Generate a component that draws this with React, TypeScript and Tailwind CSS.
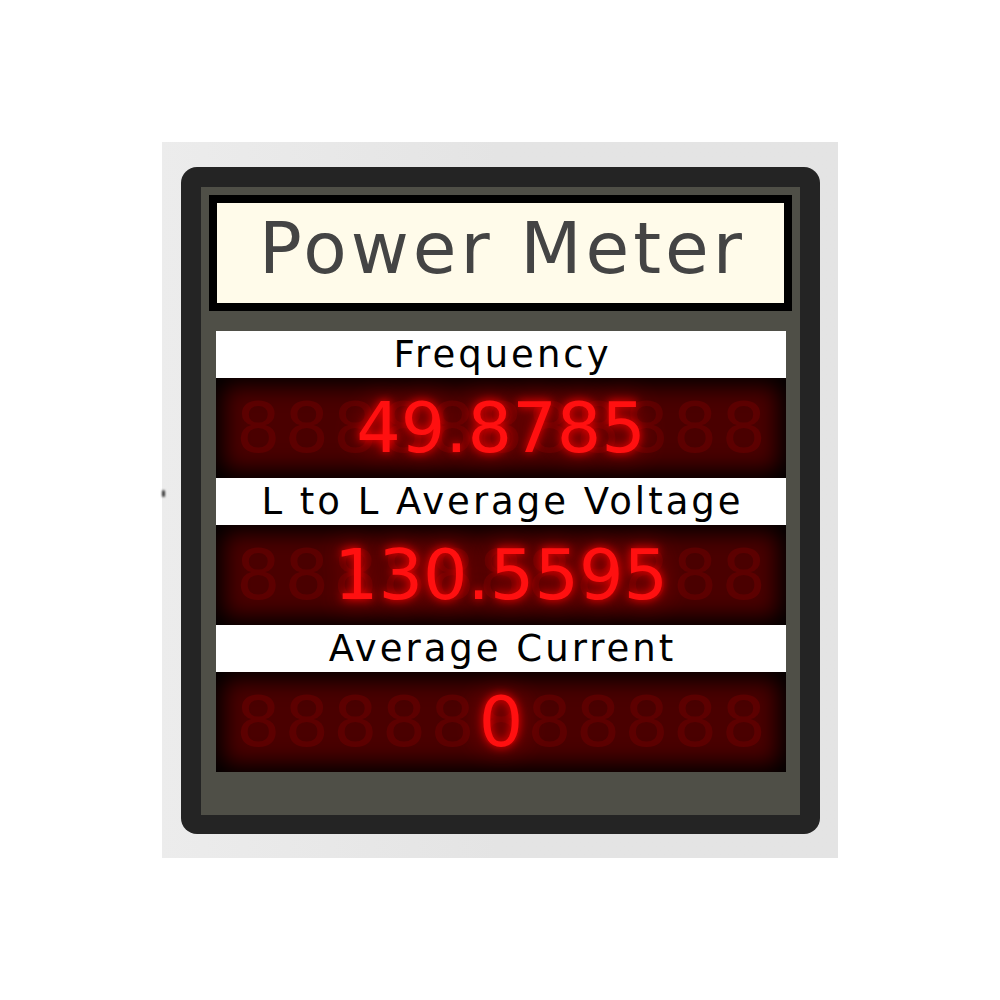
const readings = [
  { label: "Frequency", value: "49.8785" },
  { label: "L to L Average Voltage", value: "130.5595" },
  { label: "Average Current", value: "0" },
];

function Display({ value }: { value: string }) {
  return (
    <div className="relative h-[100px] bg-[#4a0000] shadow-[inset_0_0_22px_8px_#000] flex items-center justify-center overflow-hidden">
      {/* ghost segments */}
      <span className="text-[70px] leading-none tracking-[4px] text-[#6a0000]/60 select-none pl-[4px]">
        88888888888
      </span>
      <span className="absolute inset-0 flex items-center justify-center text-[70px] leading-none text-[#ff1010] [text-shadow:0_0_10px_#ff0000,0_0_26px_#c00000]">
        {value}
      </span>
    </div>
  );
}

export default function App() {
  return (
    <div
      className="w-[1000px] h-[1000px] bg-white pt-[142px] pl-[162px]"
      style={{ fontFamily: '"DejaVu Sans", "Noto Sans", sans-serif' }}
    >
      <div className="relative w-[676px] h-[716px] bg-gradient-to-r from-[#ececec] via-[#e4e4e4] to-[#e4e4e4] pt-[25px] pl-[19px]">
        <span className="absolute left-0 top-[348px] w-[3px] h-[7px] rounded-full bg-[#333] blur-[1px]" />
        <div className="w-[639px] h-[667px] rounded-[16px] bg-[#242424] p-[20px] pb-[19px]">
          <div className="h-full bg-[#4f4f47] pt-[8px] px-[8px]">
            <div className="h-[116px] border-[8px] border-black bg-[#fffbea] flex items-center justify-center pb-[10px]">
              <span className="text-[71px] leading-none text-[#444444] tracking-[4px] pl-[4px]">Power Meter</span>
            </div>
            <div className="mt-[20px] ml-[7px] mr-[6px]">
              {readings.map((r) => (
                <div key={r.label}>
                  <div className="h-[47px] bg-white flex items-center justify-center">
                    <span className="text-[37px] leading-none text-black tracking-[3px] pl-[3px]">{r.label}</span>
                  </div>
                  <Display value={r.value} />
                </div>
              ))}
            </div>
          </div>
        </div>
      </div>
    </div>
  );
}
